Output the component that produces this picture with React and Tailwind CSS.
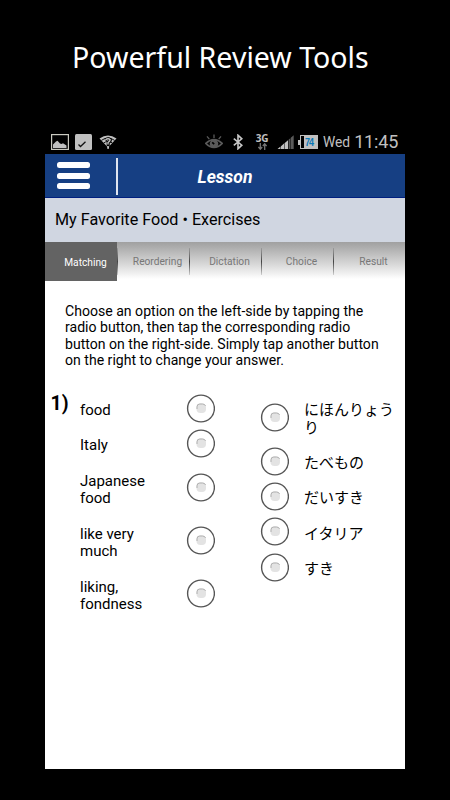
// Lesson player, matching exercise screen

const tabs = ['Reordering', 'Dictation', 'Choice', 'Result']

const leftItems = [
  { text: 'food' },
  { text: 'Italy' },
  { text: 'Japanese food', tall: true },
  { text: 'like very much', tall: true },
  { text: 'liking, fondness', tall: true },
]

const rightItems = [
  { text: 'にほんりょうり', tall: true },
  { text: 'たべもの' },
  { text: 'だいすき' },
  { text: 'イタリア' },
  { text: 'すき' },
]

function Radio() {
  return (
    <svg className="h-[29px] w-[29px] shrink-0" viewBox="0 0 29 29">
      <circle cx="15" cy="14.5" r="13.4" fill="#fff" stroke="#555" strokeWidth="1.4" />
      <rect x="10.5" y="9.5" width="9.5" height="9.5" rx="4" fill="#e3e3e3" />
      <path d="M11 15V12.8Q11 10 13.8 10H16.5Q19 10 19.5 12" fill="none" stroke="#b0b0b0" strokeWidth="1" />
    </svg>
  )
}

function StatusBar() {
  return (
    <div className="flex h-[24px] items-center bg-black text-[#c0c0c0]">
      {/* Notifications */}
      <svg className="ml-[6px] h-[16px] w-[18px]" viewBox="0 0 18 16">
        <rect x="0.6" y="0.6" width="16.8" height="14.8" fill="none" stroke="#c9c9c0" strokeWidth="1.2" />
        <path d="M2 14V10.5L5 7.5L6.5 6.7L9 9.5L10.5 10L12 9.2L15.5 11.5V14Z" fill="#c0c0c0" />
      </svg>
      <svg className="ml-[6px] h-[16px] w-[17px]" viewBox="0 0 17 16">
        <rect width="17" height="16" rx="1.5" fill="#c0c0c0" />
        <path d="M3.5 10.5L5.5 12.5L10.5 7.8" fill="none" stroke="#111" strokeWidth="1.3" />
      </svg>
      <svg className="ml-[7px] h-[14px] w-[18px]" viewBox="0 0 18 14">
        <path d="M0.5 3.6Q9 -2.8 17.5 3.6L9 12.4Z" fill="#c0c0c0" />
        <path d="M2.4 5.4Q9 0.6 15.6 5.4M4.6 8Q9 4.8 13.4 8" fill="none" stroke="#000" strokeWidth="0.9" />
        <path d="M6.2 5Q9 2.6 11.4 4.6Q11.6 6.4 9.2 7.6V11" fill="none" stroke="#000" strokeWidth="3" />
        <path d="M6.4 5Q9 2.8 11.2 4.7Q11 6.3 9 7.6V9.6" fill="none" stroke="#c0c0c0" strokeWidth="1.4" />
        <rect x="8.2" y="12" width="1.8" height="1.8" fill="#c0c0c0" />
      </svg>

      {/* System icons */}
      <svg className="ml-[88px] h-[16px] w-[18px]" viewBox="0 0 18 16">
        <path d="M0.8 9.4Q9 2 17.2 9.4Q9 17.6 0.8 9.4Z" fill="none" stroke="#5a5a5a" strokeWidth="1.6" />
        <circle cx="9" cy="9.7" r="4.3" fill="#5a5a5a" />
        <path d="M7.2 8.3L9.2 10.2" stroke="#000" strokeWidth="1.6" />
        <path d="M9 0.6V4M2 2.4L4.3 5.2M16 2.4L13.7 5.2" stroke="#5a5a5a" strokeWidth="1.3" />
      </svg>
      <svg className="ml-[10px] h-[16px] w-[10px]" viewBox="0 0 10 16">
        <path d="M0.8 4.6L8.8 11.2L5 14.8V1.2L8.8 4.8L0.8 11.4" fill="none" stroke="#c8c8c8" strokeWidth="1.6" />
      </svg>
      <div className="ml-[12px] flex h-[18px] w-[14px] flex-col items-center">
        <span className="h-[9px] font-['Open_Sans',sans-serif] text-[10px] leading-[10px] font-bold tracking-[-0.3px]">3G</span>
        <svg className="mt-[1px] h-[7px] w-[9px]" viewBox="0 0 9 7">
          <path d="M2.3 0V6M0.4 4L2.3 6.2L4.2 4M6.7 7V1M4.8 3L6.7 0.8L8.6 3" fill="none" stroke="#777" strokeWidth="1.3" />
        </svg>
      </div>
      <svg className="ml-[8px] h-[14px] w-[17px]" viewBox="0 0 17 14">
        <path d="M0.5 14L3.5 11.6V14ZM4 11.2L7 8.6V14H4ZM7.5 8.2L11 5.2V14H7.5Z" fill="#c0c0c0" />
        <path d="M11.6 4.7L13.3 3.3V14H11.6ZM13.8 2.8L16.7 0.3V14H13.8Z" fill="#5a5a5a" />
      </svg>
      <div className="ml-[4px] flex items-center">
        <span className="h-[5px] w-[2px] bg-[#c0c0c0]" />
        <span className="flex h-[14px] w-[18px] items-center justify-center border border-[#c0c0c0] bg-linear-to-r from-black from-20% to-[#c0c0c0] to-20%">
          <span className="scale-y-125 font-['Liberation_Sans',sans-serif] text-[9px] leading-[12px] font-bold tracking-[-1px] text-[#0878b8]">
            74
          </span>
        </span>
      </div>
      <span className="ml-[5px] font-[Roboto,sans-serif] text-[13.8px] leading-[26px] whitespace-nowrap">Wed</span>
      <span className="ml-[4px] font-[Roboto,sans-serif] text-[18px] leading-[24px] tracking-[-0.15px] whitespace-nowrap">11:45</span>
    </div>
  )
}

export default function App() {
  return (
    <div className="flex h-[800px] w-[450px] flex-col overflow-hidden bg-black">
      <h1 className="h-[130px] pt-[37px] pl-[71.5px] font-['Noto_Sans',sans-serif] text-[29.5px] leading-[40px] font-normal whitespace-nowrap text-white">
        <span className="inline-block origin-left scale-x-[0.968]">Powerful Review Tools</span>
      </h1>

      <div className="mx-auto flex h-[639px] w-[360px] flex-col bg-white font-[Roboto,sans-serif] text-black">
        <StatusBar />

        {/* Header */}
        <header className="flex h-[44px] items-start border-b border-[#001f80] bg-[#163f83]">
          <div className="mt-[8px] ml-[12px] flex w-[33px] flex-col gap-[4.5px]">
            <span className="h-[6px] rounded-[2.5px] bg-white" />
            <span className="h-[6px] rounded-[2.5px] bg-white" />
            <span className="h-[6px] rounded-[2.5px] bg-white" />
          </div>
          <div className="mt-[4px] ml-[26px] h-[37px] w-[1.5px] bg-[#dfe5f0]" />
          <h2 className="ml-[80px] text-[17.5px] leading-[46px] font-bold text-white italic">Lesson</h2>
        </header>

        {/* Lesson title */}
        <div className="h-[44px] bg-[#d0d6e1] pl-[10px] text-[16.15px] leading-[43px] whitespace-nowrap">
          My Favorite Food • Exercises
        </div>

        {/* Tabs */}
        <nav className="flex h-[39px] bg-linear-to-b from-[#a0a0a0] to-white to-95% text-[10.2px] leading-[41px] text-[#777]">
          <div className="w-[72px] bg-[#636363] pl-[9px] text-center text-white">Matching</div>
          {tabs.map((tab) => (
            <div key={tab} className="flex w-[72px] items-center">
              <span className="h-[27px] w-px bg-linear-to-b from-[#444]/20 via-[#444] to-[#444]/20" />
              <span className="flex-1 pl-[8px] text-center">{tab}</span>
            </div>
          ))}
        </nav>

        {/* Instructions */}
        <p className="mt-[22px] ml-[20px] text-[14.08px] leading-[16.4px] whitespace-nowrap">
          Choose an option on the left-side by tapping the
          <br />
          radio button, then tap the corresponding radio
          <br />
          button on the right-side. Simply tap another button
          <br />
          on the right to change your answer.
        </p>

        {/* Question */}
        <section className="mt-[22px] flex">
          <span className="w-[35px] pt-px pl-[5.5px] text-[19.5px] leading-[24px] font-bold">1)</span>
          <div className="w-[181px]">
            {leftItems.map((item) => (
              <div
                key={item.text}
                className={item.tall ? 'flex h-[53px] items-center' : 'flex h-[35.3px] items-center'}
              >
                <span className="mr-[26px] w-[80px] pt-[5px] text-[15px] leading-[17.6px]">{item.text}</span>
                <Radio />
              </div>
            ))}
          </div>
          <div className="-ml-px">
            {rightItems.map((item) => (
              <div
                key={item.text}
                className={item.tall ? 'flex h-[53px] items-center' : 'flex h-[35.3px] items-center'}
              >
                <Radio />
                <span className="ml-[15px] w-[91px] pt-px font-['Noto_Sans_CJK_JP',sans-serif] text-[15px] leading-[17.6px]">
                  {item.text}
                </span>
              </div>
            ))}
          </div>
        </section>
      </div>
    </div>
  )
}
